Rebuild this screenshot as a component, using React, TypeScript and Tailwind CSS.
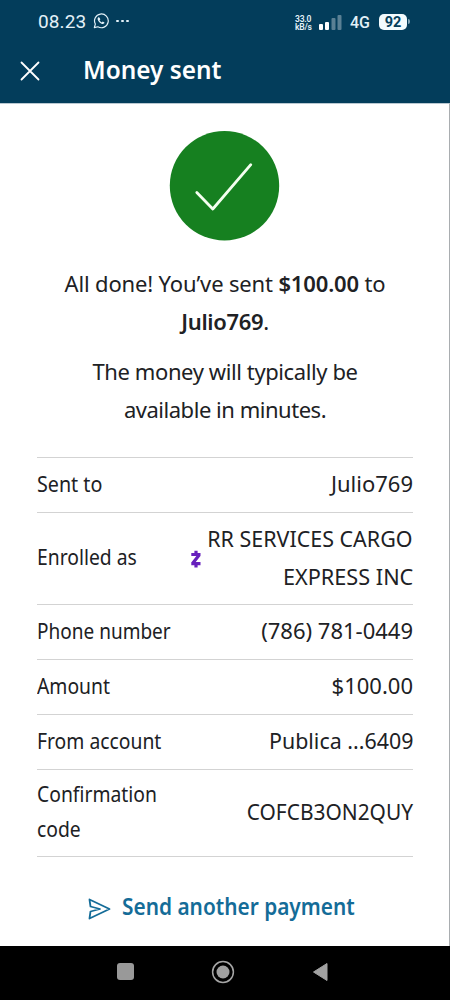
import React from "react";

function StatusBar() {
  return (
    <div className="flex h-[42px] items-center pl-[38px] pr-[40px] text-[#e3f1f8]">
      <span className="w-[49px] whitespace-nowrap pt-[2px] font-['Roboto',sans-serif] text-[19px] leading-[42px] tracking-[0.1px]">08.23</span>
      <svg className="ml-[6px]" width="16" height="16" viewBox="0 0 24 24" fill="none" stroke="currentColor" strokeWidth="1.800">
        <path d="M2 22l1.5-5.4A10.3 10.3 0 1 1 7.3 20.600z" strokeLinejoin="round" />
        <path d="M8 6.500c-2 1.500-1.200 4.500 1.500 7.200s5.700 3.700 7.400 1.800c.8-1-.2-1.700-2.400-2.600l-1.300 1.400c-1.500-.7-2.800-2-3.500-3.400l1.300-1.300C10.200 7 9.300 5.500 8 6.500z" fill="currentColor" stroke="none" />
      </svg>
      <span className="ml-[7px] flex gap-[2.500px]">
        <i className="size-[2.500px] rounded-full bg-current" />
        <i className="size-[2.500px] rounded-full bg-current" />
        <i className="size-[2.500px] rounded-full bg-current" />
      </span>
      <div className="ml-auto flex items-center">
        <span className="mt-[3px] w-[18px] whitespace-nowrap font-['Roboto',sans-serif] text-[8.500px] font-semibold leading-[8px] tracking-[-0.200px]">33.0<br />kB/s</span>
        <svg className="ml-[6px] mt-[3px]" width="23" height="16" viewBox="0 0 23 16" fill="white">
          <rect x="0" y="9" width="4" height="6" rx="1" />
          <rect x="6" y="7" width="4" height="8" rx="1" />
          <rect x="12.500" y="3" width="4" height="12" rx="1" opacity=".35" />
          <rect x="18.500" y="0" width="4" height="15" rx="1" opacity=".35" />
        </svg>
        <span className="ml-[8px] mt-[3px] w-[21px] font-['Roboto',sans-serif] text-[16px] font-medium leading-none">4G</span>
        <span className="ml-[8px] mt-[1px] h-[16px] w-[28px] rounded-[5px] bg-[#f2fbfe] text-center font-['Roboto',sans-serif] text-[14.500px] font-bold leading-[17px] text-[#033d5b]">92</span>
        <span className="ml-[1px] h-[5px] w-[2px] rounded-r bg-[#7ba0b3]" />
      </div>
    </div>
  );
}

function Label({ scale = "scale-x-[0.92]", children }: { scale?: string; children: React.ReactNode }) {
  return <span className={`inline-block origin-left ${scale}`}>{children}</span>;
}

function Value({ scale = "", children }: { scale?: string; children: React.ReactNode }) {
  return <span className={`inline-block origin-right ${scale}`}>{children}</span>;
}

function Row({ label, height, children }: { label: React.ReactNode; height: string; children: React.ReactNode }) {
  return (
    <div className={`flex items-center justify-between border-b border-[#d3d3d3] pb-[2px] ${height}`}>
      <div className="text-[21px] leading-[35px]">{label}</div>
      <div className="text-right text-[22px] leading-[37.500px]">{children}</div>
    </div>
  );
}

export default function App() {
  return (
    <div className="flex h-[1000px] w-[450px] flex-col overflow-hidden bg-white font-['Noto_Sans',sans-serif] text-[#202124]">
      <header className="h-[103px] shrink-0 bg-[#033d5b]">
        <StatusBar />
        <div className="flex h-[56px] items-center pl-[20px] text-white">
          <svg className="mt-[2px]" width="20" height="20" viewBox="0 0 20 20" stroke="currentColor" strokeWidth="1.800" strokeLinecap="round">
            <path d="M1.500 1.500l17 17M18.500 1.500l-17 17" />
          </svg>
          <h1 className="mb-[2px] ml-[43px] origin-left scale-x-[0.975] whitespace-nowrap text-[25px] font-semibold leading-[36px]">Money sent</h1>
        </div>
      </header>

      <main className="flex h-[843px] shrink-0 flex-col border-r border-t border-r-[#a9adb0] border-t-[#b9c8d1] pl-[37px] pr-[36px] pt-[26px]">
        <svg className="ml-[132px] shrink-0" width="111" height="111" viewBox="0 0 111 111">
          <circle cx="55.500" cy="55.700" r="54.700" fill="#168020" />
          <path d="M27.800 62.500l16 16.500 38-44.300" fill="none" stroke="#f4fff0" strokeWidth="2.800" strokeLinecap="round" strokeLinejoin="round" />
        </svg>

        <div className="mt-[24px] whitespace-nowrap text-center text-[22px] leading-[37.500px]">
          <p>
            <span className="tracking-[-0.150px]">All done! You’ve sent <b className="font-semibold">$100.00</b> to</span><br />
            <span className="tracking-[-0.350px]"><b className="font-semibold">Julio769</b>.</span>
          </p>
          <p className="mt-[13px]">
            <span className="tracking-[-0.400px]">The money will typically be</span><br />
            <span className="tracking-[-0.470px]">available in minutes.</span>
          </p>
        </div>

        <div className="mt-[29px] whitespace-nowrap border-t border-[#d3d3d3]">
          <Row height="h-[55px]" label={<Label scale="scale-x-[0.938]">Sent to</Label>}><Value>Julio769</Value></Row>
          <Row height="h-[92px]" label={<Label>Enrolled as</Label>}>
            <div className="flex items-center">
              <svg className="mr-[1px] mt-[3px]" width="10" height="18" viewBox="0 0 10 18" fill="none" stroke="#6720bd" strokeWidth="3.200">
                <path d="M.3 4.500h9.200M.3 13.700h9.200M8.200 5L1.700 13.200M5 .8v4M5 13.500v4" />
              </svg>
              <div><Value scale="scale-x-[0.975]">RR SERVICES CARGO</Value><br /><Value scale="scale-x-[0.985]">EXPRESS INC</Value></div>
            </div>
          </Row>
          <Row height="h-[55px]" label={<Label scale="scale-x-[0.905]">Phone number</Label>}><Value>(786) 781-0449</Value></Row>
          <Row height="h-[55px]" label={<Label>Amount</Label>}><Value>$100.00</Value></Row>
          <Row height="h-[55px]" label={<Label>From account</Label>}><Value scale="scale-x-[0.973]">Publica ...6409</Value></Row>
          <Row height="h-[87px]" label={<><Label>Confirmation</Label><br /><Label>code</Label></>}><Value scale="scale-x-[0.95]">COFCB3ON2QUY</Value></Row>
        </div>

        <div className="mt-[32px] flex items-center whitespace-nowrap pl-[51px] text-[#146c98]">
          <svg className="mt-[4px]" width="23" height="22" viewBox="0 0 23 22" fill="none" stroke="currentColor" strokeWidth="1.800" strokeLinejoin="round" strokeLinecap="round">
            <path d="M1.500 1.500L21.500 11 1.500 20.500l1-7L12 11 2.500 8.500z" />
          </svg>
          <span className="ml-[11px] origin-left scale-x-[0.926] text-[22.500px] font-semibold leading-[36px]">Send another payment</span>
        </div>
      </main>

      <nav className="flex h-[54px] shrink-0 items-center bg-black pb-[3px] pl-[117px]">
        <span className="size-[17px] rounded-[3px] bg-[#999]" />
        <svg className="ml-[77px]" width="24" height="24" viewBox="0 0 24 24">
          <circle cx="12" cy="12" r="10.400" fill="none" stroke="#a5a5a5" strokeWidth="1.500" />
          <circle cx="12" cy="12" r="6.500" fill="#a0a0a0" />
        </svg>
        <svg className="ml-[77px]" width="17" height="20" viewBox="0 0 17 20"><path d="M1.500 10L15 1.500v17z" fill="#a2a2a2" stroke="#a2a2a2" strokeLinejoin="round" /></svg>
      </nav>
    </div>
  );
}
